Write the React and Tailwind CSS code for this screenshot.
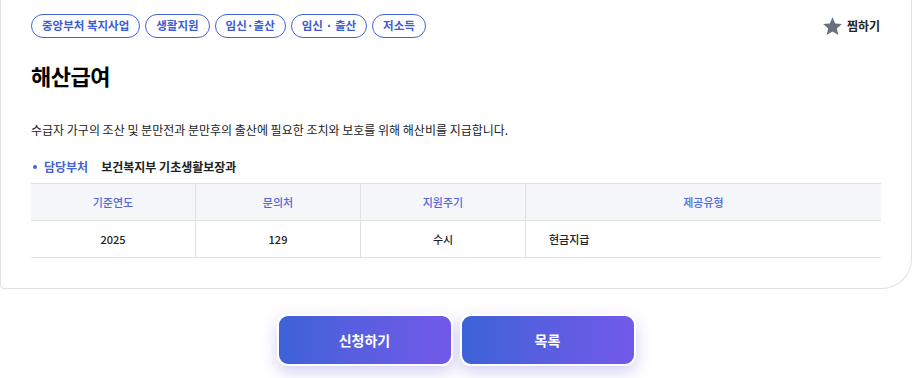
import React from 'react';

const tags = ['중앙부처 복지사업', '생활지원', '임신·출산', '임신 · 출산', '저소득'];

const cols = [
  { head: '기준연도', value: '2025', w: 'w-[165px]', align: 'text-center' },
  { head: '문의처', value: '129', w: 'w-[165px]', align: 'text-center' },
  { head: '지원주기', value: '수시', w: 'w-[165px]', align: 'text-center' },
  { head: '제공유형', value: '현금지급', w: 'flex-1', align: 'text-left pl-[23px]' },
];

function Star() {
  return (
    <svg viewBox="0 0 24 24" className="w-[21px] h-[21px]" fill="#6b6f80">
      <path d="M12 1.5l3.1 7 7.6.7-5.75 5.05 1.72 7.45L12 17.8l-6.67 3.9 1.72-7.45L1.3 9.2l7.6-.7z" />
    </svg>
  );
}

export default function App() {
  return (
    <div className="w-[915px] h-[378px] bg-white overflow-hidden font-['Noto_Sans_CJK_KR','Noto_Sans',sans-serif] text-[#222]">
      {/* Card */}
      <div className="w-[912px] border border-t-0 border-[#e2e2e2] rounded-bl-[4px] rounded-br-[30px] px-[30px] pt-[14px] pb-[30px]">
        <div className="flex items-center justify-between">
          <div className="flex gap-[5px]">
            {tags.map((t) => (
              <span
                key={t}
                className="h-[24px] px-[10px] flex items-center border border-[#4263d8] rounded-full text-[11.5px] font-semibold text-[#3d5bd4] leading-none"
              >
                {t}
              </span>
            ))}
          </div>
          <button className="flex items-center gap-[4px] text-[12px] font-bold text-[#222] mr-[1px]">
            <Star />
            <span>찜하기</span>
          </button>
        </div>

        <h1 className="mt-[22px] text-[22px] font-bold leading-[30px] text-black tracking-[-0.5px]">해산급여</h1>

        <p className="mt-[31px] text-[12px] leading-[18px]">
          수급자 가구의 조산 및 분만전과 분만후의 출산에 필요한 조치와 보호를 위해 해산비를 지급합니다.
        </p>

        <div className="mt-[19px] flex items-center text-[12px] leading-[18px] font-semibold">
          <span className="w-[4px] h-[4px] rounded-full bg-[#4263d8] ml-[2px] mr-[7px]" />
          <span className="text-[#4263d8]">담당부처</span>
          <span className="ml-[13px] text-[#222]">보건복지부 기초생활보장과</span>
        </div>

        <div className="mt-[7px] border-t border-b border-[#e0e0e0]">
          <div className="flex bg-[#f5f6fa] border-b border-[#e0e0e0]">
            {cols.map((c, i) => (
              <div
                key={c.head}
                className={`${c.w} h-[36px] flex items-center justify-center text-[11px] font-medium text-[#5166dc] ${i < 3 ? 'border-r border-[#e0e0e0]' : ''}`}
              >
                {c.head}
              </div>
            ))}
          </div>
          <div className="flex">
            {cols.map((c, i) => (
              <div
                key={c.head}
                className={`${c.w} ${c.align} h-[36px] leading-[36px] text-[11px] font-medium text-[#222] ${i < 3 ? 'border-r border-[#e0e0e0]' : ''}`}
              >
                {c.value}
              </div>
            ))}
          </div>
        </div>
      </div>

      {/* Buttons */}
      <div className="w-[912px] flex justify-center gap-[7px] mt-[25px]">
        <button className="w-[176px] h-[52px] rounded-[11px] border-2 border-white bg-gradient-to-r from-[#3c62d8] to-[#7259e9] text-white text-[14px] font-bold shadow-[0_6px_16px_rgba(110,100,220,0.3)]">
          신청하기
        </button>
        <button className="w-[176px] h-[52px] rounded-[11px] border-2 border-white bg-gradient-to-r from-[#3c62d8] to-[#7259e9] text-white text-[14px] font-bold shadow-[0_6px_16px_rgba(110,100,220,0.3)]">
          목록
        </button>
      </div>
    </div>
  );
}
